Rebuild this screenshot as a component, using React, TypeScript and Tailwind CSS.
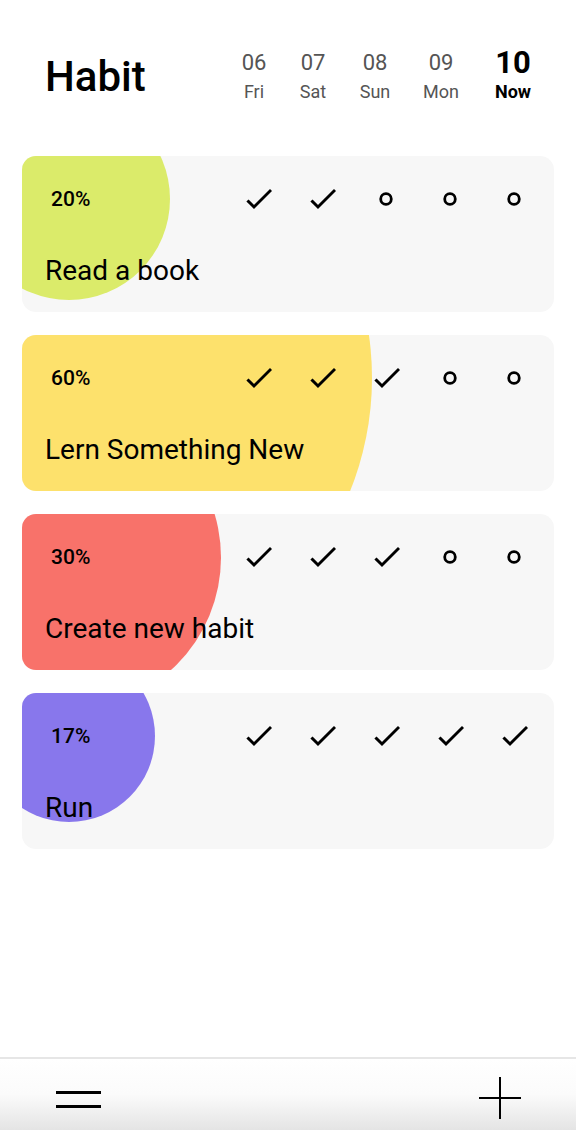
import React from "react";

type Habit = {
  name: string;
  pct: number;
  color: string;
  days: boolean[];
};

const HABITS: Habit[] = [
  { name: "Read a book", pct: 20, color: "#dbeb6a", days: [true, true, false, false, false] },
  { name: "Lern Something New", pct: 60, color: "#fde16c", days: [true, true, true, false, false] },
  { name: "Create new habit", pct: 30, color: "#f8726a", days: [true, true, true, false, false] },
  { name: "Run", pct: 17, color: "#8877ec", days: [true, true, true, true, true] },
];

const DATES = [
  { num: "06", day: "Fri", ml: "" },
  { num: "07", day: "Sat", ml: "ml-[19px]" },
  { num: "08", day: "Sun", ml: "ml-[22px]" },
  { num: "09", day: "Mon", ml: "ml-[26px]" },
];

function Check() {
  return (
    <svg width="28" height="24" viewBox="0 0 28 24" fill="none">
      <path d="M4.5 14.5 L10 20 L26 4" stroke="#000" strokeWidth="3" strokeLinecap="square" />
    </svg>
  );
}

function Dot() {
  return (
    <svg width="16" height="16" viewBox="0 0 16 16" fill="none">
      <circle cx="8" cy="8" r="5.3" stroke="#000" strokeWidth="2.8" />
    </svg>
  );
}

function HabitCard({ habit }: { habit: Habit }) {
  const r = habit.pct * 5.05;
  return (
    <div className="relative h-[156px] overflow-hidden rounded-[14px] bg-[#f7f7f7]">
      {/* progress blob */}
      <div
        className="absolute rounded-full"
        style={{ width: r * 2, height: r * 2, left: 47 - r, top: 43 - r, background: habit.color }}
      />
      <div className="relative pt-[31px]">
        <div className="flex h-[24px] items-center pl-[29px] pr-[8px]">
          <span className="flex-1 text-[21px] font-medium leading-none text-black">{habit.pct}%</span>
          {habit.days.map((done, i) => (
            <div key={i} className="flex w-[64px] items-center justify-center">
              {done ? <Check /> : <Dot />}
            </div>
          ))}
        </div>
        <p className="mt-[44px] pl-[23px] text-[28px] leading-[32px] text-black">{habit.name}</p>
      </div>
    </div>
  );
}

export default function App() {
  return (
    <main
      className="flex h-[1130px] w-full flex-col bg-white"
      style={{ fontFamily: "Roboto, 'Noto Sans', sans-serif" }}
    >
      {/* Header */}
      <div className="flex items-center justify-between pl-[45px] pr-[43px] pt-[51px]">
        <h1 className="text-[42px] font-medium leading-none text-black">Habit</h1>
        <div className="flex items-start">
          {DATES.map((d) => (
            <div key={d.num} className={`flex w-[40px] flex-col items-center ${d.ml}`}>
              <span className="text-[22px] leading-[24px] text-[#555]">{d.num}</span>
              <span className="mt-[7px] text-[18px] leading-[20px] text-[#555]">{d.day}</span>
            </div>
          ))}
          <div className="ml-[32px] flex w-[40px] flex-col items-center">
            <span className="text-[31px] font-bold leading-[24px] text-black">10</span>
            <span className="mt-[7px] text-[18px] font-bold leading-[20px] text-black">Now</span>
          </div>
        </div>
      </div>

      {/* Habits */}
      <div className="mt-[54px] flex flex-col gap-[23px] px-[22px]">
        {HABITS.map((h) => (
          <HabitCard key={h.name} habit={h} />
        ))}
      </div>

      <div className="flex-1" />

      {/* Bottom bar */}
      <div className="flex h-[73px] items-start justify-between border-t-2 border-[#e6e6e6] bg-gradient-to-b from-white via-[#fbfbfb] to-[#e4e4e4] pl-[56px] pr-[55px] pt-[18px]">
        <svg width="45" height="20" viewBox="0 0 45 20" fill="none" className="mt-[13px]">
          <rect x="0" y="1" width="45" height="3" fill="#000" />
          <rect x="0" y="15" width="45" height="3" fill="#000" />
        </svg>
        <svg width="42" height="42" viewBox="0 0 42 42" fill="none">
          <rect x="20" y="0" width="2" height="42" fill="#000" />
          <rect x="0" y="20" width="42" height="2" fill="#000" />
        </svg>
      </div>
    </main>
  );
}
